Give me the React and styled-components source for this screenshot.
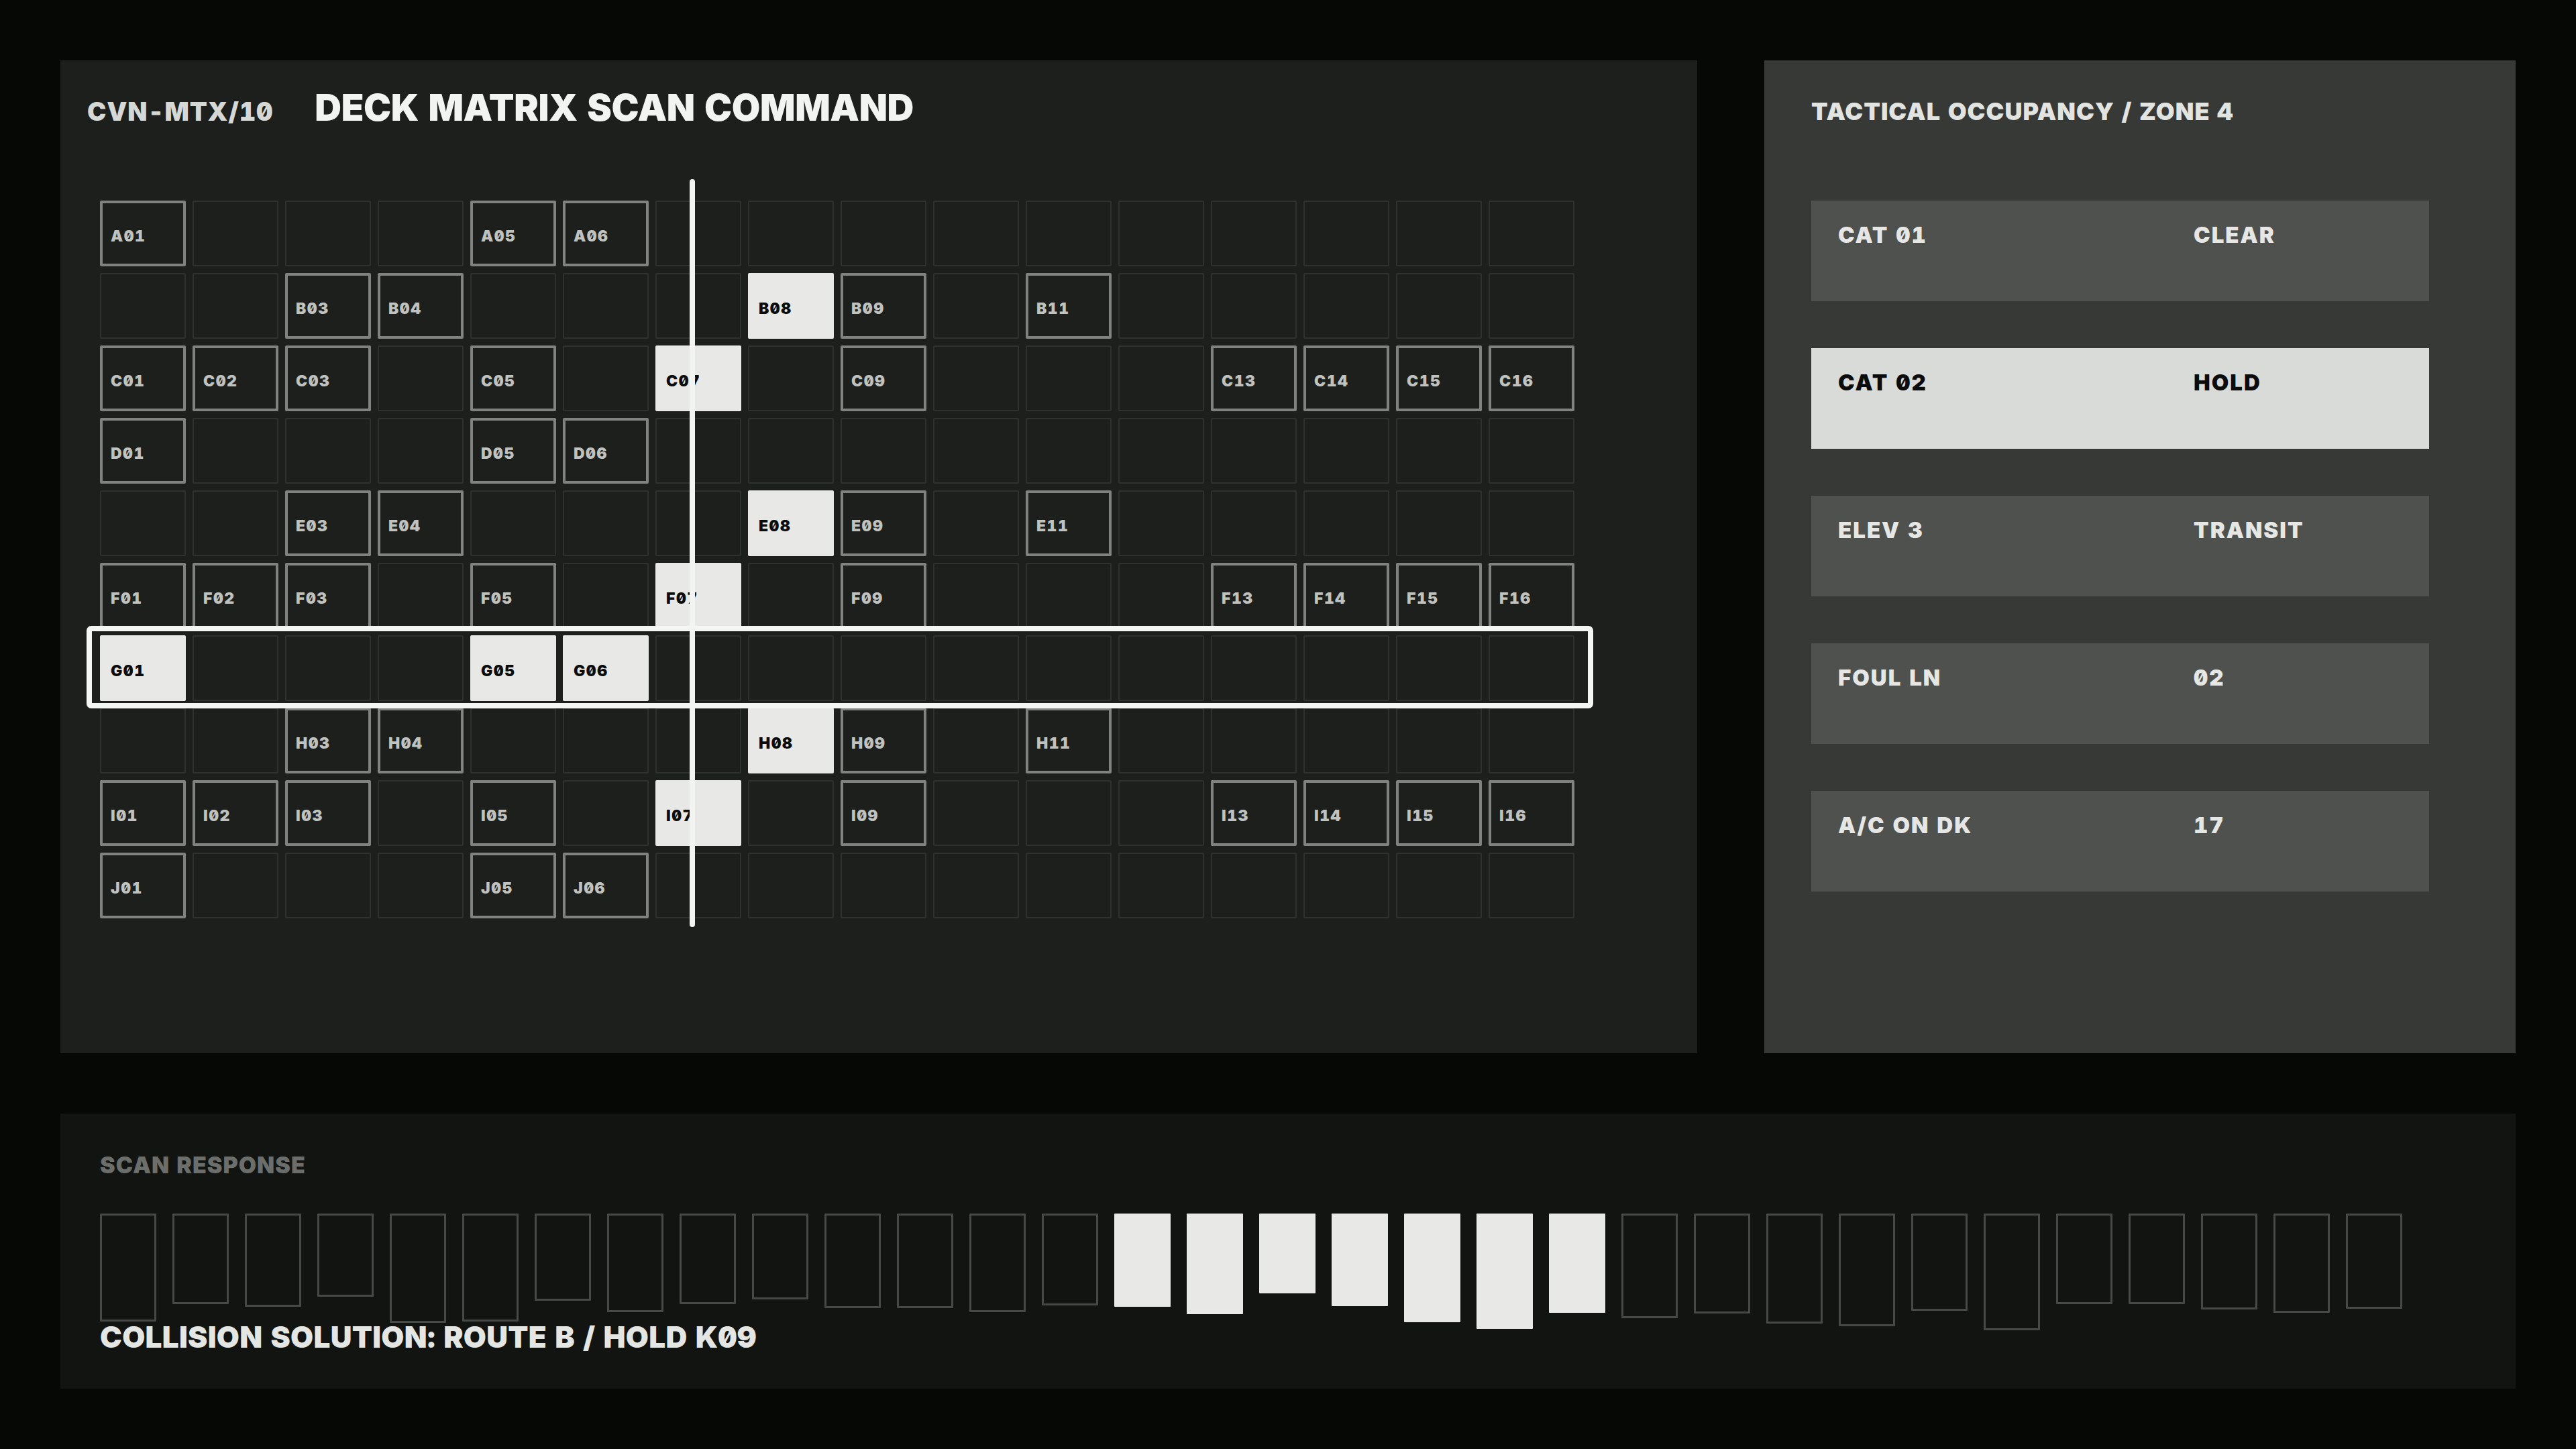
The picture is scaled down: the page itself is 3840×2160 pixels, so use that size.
import styled, { createGlobalStyle } from "styled-components";

const GlobalStyle = createGlobalStyle`
  html, body {
    margin: 0;
    padding: 0;
    background: #060806;
  }
  * {
    box-sizing: border-box;
  }
`;

const Page = styled.div`
  width: 3840px;
  height: 2160px;
  padding: 90px;
  display: grid;
  grid-template-columns: 1fr 1120px;
  grid-template-rows: 1480px 410px;
  column-gap: 100px;
  row-gap: 90px;
  background: #060806;
  font-family: Inter, "Noto Sans", "DejaVu Sans", sans-serif;
  font-feature-settings: "zero" 1, "tnum" 1;
  font-weight: 900;
`;

const MatrixPanel = styled.section`
  background: #1d1f1d;
  padding: 37px 40px;
`;

const Header = styled.header`
  display: flex;
  align-items: baseline;
  gap: 62px;
  line-height: 1.2;
`;

const Code = styled.span`
  font-size: 38px;
  letter-spacing: 0.8px;
  color: #d6d8d5;
`;

const Title = styled.h1`
  margin: 0;
  font-size: 55px;
  font-weight: 900;
  letter-spacing: -0.4px;
  color: #f2f4f1;
`;

const Grid = styled.div`
  position: relative;
  margin: 106px 0 0 19px;
  width: 2198px;
  display: grid;
  grid-template-columns: repeat(16, 128px);
  grid-auto-rows: 98px;
  gap: 10px;
`;

const Cell = styled.div`
  display: flex;
  align-items: center;
  padding: 10px 0 0 ${({ $state }) => ($state === "occupied" ? "12px" : "16px")};
  font-size: 23px;
  letter-spacing: 1.5px;
  line-height: 1.2;
  border-radius: 2px;
  background: ${({ $state }) => ($state === "active" ? "#e8e9e6" : "transparent")};
  color: ${({ $state }) => ($state === "active" ? "#0b0c0b" : "#c0c2bf")};
  border: ${({ $state }) =>
    $state === "occupied"
      ? "4px solid #80827f"
      : $state === "active"
      ? "none"
      : "2px solid #2f312e"};
`;

const ScanLine = styled.div`
  position: absolute;
  left: 40%;
  top: -32px;
  bottom: -13px;
  width: 8px;
  border-radius: 4px;
  background: #f2f4f1;
  z-index: 2;
`;

const RowFrame = styled.div`
  position: absolute;
  left: -20px;
  right: -28px;
  top: ${({ $row }) => $row * 108 - 14}px;
  height: 123px;
  border: 8px solid #f4f6f3;
  border-radius: 7px;
  z-index: 3;
  pointer-events: none;
`;

const OccupancyPanel = styled.aside`
  background: #373936;
  padding: 55px 70px;
`;

const PanelTitle = styled.h2`
  margin: 0 0 111px;
  font-size: 36px;
  font-weight: 900;
  line-height: 1.2;
  letter-spacing: 1px;
  color: #e2e4e1;
`;

const StatusList = styled.div`
  display: flex;
  flex-direction: column;
  gap: 70px;
`;

const StatusRow = styled.div`
  width: 921px;
  height: 150px;
  padding: 32px 40px;
  display: grid;
  grid-template-columns: 530px 1fr;
  align-items: start;
  font-size: 33px;
  line-height: 1.2;
  letter-spacing: 2px;
  background: ${({ $active }) => ($active ? "#d9dbd8" : "#4f514e")};
  color: ${({ $active }) => ($active ? "#0b0c0b" : "#e6e7e4")};
`;

const ResponsePanel = styled.section`
  grid-column: 1 / -1;
  background: #121412;
  padding: 57px 59px 0;
`;

const ResponseLabel = styled.div`
  font-size: 34px;
  line-height: 1.2;
  letter-spacing: 1px;
  color: #6c6e6b;
`;

const Bars = styled.div`
  margin-top: 51px;
  height: 158px;
  display: flex;
  align-items: flex-start;
  gap: 24px;
`;

const Bar = styled.div`
  flex: 0 0 84px;
  border-radius: 1px;
  background: ${({ $hot }) => ($hot ? "#e8e9e6" : "transparent")};
  border: ${({ $hot }) => ($hot ? "none" : "3px solid #474946")};
`;

const Solution = styled.div`
  font-size: 44px;
  line-height: 1.2;
  letter-spacing: 0.3px;
  color: #e4e6e3;
`;

// column numbers per row pattern
const patterns = {
  p1: { occupied: [1, 5, 6], active: [] },
  p2: { occupied: [3, 4, 9, 11], active: [8] },
  p3: { occupied: [1, 2, 3, 5, 9, 13, 14, 15, 16], active: [7] },
};

const rows = [
  ["A", "p1"],
  ["B", "p2"],
  ["C", "p3"],
  ["D", "p1"],
  ["E", "p2"],
  ["F", "p3"],
  ["G", "p1", true],
  ["H", "p2"],
  ["I", "p3"],
  ["J", "p1"],
];

const cells = rows.flatMap(([letter, key, scanned]) => {
  const p = patterns[key];
  return Array.from({ length: 16 }, (_, i) => {
    const col = i + 1;
    let state = "empty";
    if (p.active.includes(col)) state = "active";
    if (p.occupied.includes(col)) state = scanned ? "active" : "occupied";
    return { id: `${letter}${String(col).padStart(2, "0")}`, state };
  });
});

const status = [
  { label: "CAT 01", value: "CLEAR" },
  { label: "CAT 02", value: "HOLD", active: true },
  { label: "ELEV 3", value: "TRANSIT" },
  { label: "FOUL LN", value: "02" },
  { label: "A/C ON DK", value: "17" },
];

const bars = [
  161, 135, 139, 124, 163, 161, 130, 147, 135, 128, 141, 141, 147, 137,
  139, 150, 119, 138, 162, 172, 148,
  156, 149, 164, 168, 145, 174, 135, 135, 143, 148, 142,
];

export default function App() {
  return (
    <>
      <GlobalStyle />
      <Page>
        <MatrixPanel>
          <Header>
            <Code>CVN-MTX/10</Code>
            <Title>DECK MATRIX SCAN COMMAND</Title>
          </Header>
          <Grid>
            {cells.map((c) => (
              <Cell key={c.id} $state={c.state}>
                {c.state !== "empty" && c.id}
              </Cell>
            ))}
            <RowFrame $row={6} />
            <ScanLine />
          </Grid>
        </MatrixPanel>

        <OccupancyPanel>
          <PanelTitle>TACTICAL OCCUPANCY / ZONE 4</PanelTitle>
          <StatusList>
            {status.map((s) => (
              <StatusRow key={s.label} $active={s.active}>
                <span>{s.label}</span>
                <span>{s.value}</span>
              </StatusRow>
            ))}
          </StatusList>
        </OccupancyPanel>

        <ResponsePanel>
          <ResponseLabel>SCAN RESPONSE</ResponseLabel>
          <Bars>
            {bars.map((h, i) => (
              <Bar key={i} $hot={i >= 14 && i <= 20} style={{ height: h }} />
            ))}
          </Bars>
          <Solution>COLLISION SOLUTION: ROUTE B / HOLD K09</Solution>
        </ResponsePanel>
      </Page>
    </>
  );
}
